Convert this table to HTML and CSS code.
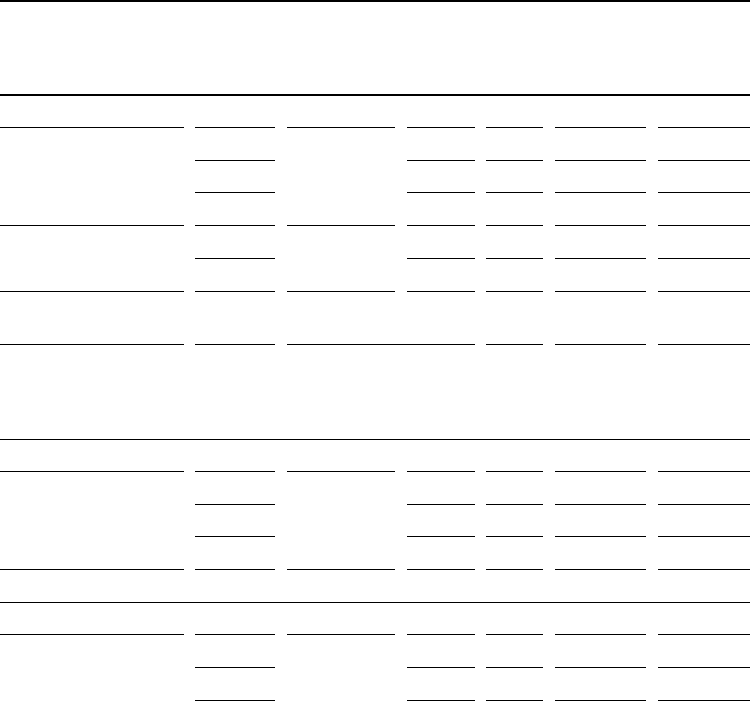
FILE: index.html
```html
<!DOCTYPE html>
<html>
<head>
<meta charset="utf-8">
<link rel="stylesheet" href="styles.css">
</head>
<body>
<div class="sheet">
  <div class="row head top-rule"></div>
  <div class="row h33 top-rule"></div>

  <div class="row h33"><div class="c c1 r"></div><div class="c c2 r"></div><div class="c c3 r"></div><div class="c c4 r"></div><div class="c c5 r"></div><div class="c c6 r"></div><div class="c c7 r"></div></div>
  <div class="row h32"><div class="c c1"></div><div class="c c2 r"></div><div class="c c3"></div><div class="c c4 r"></div><div class="c c5 r"></div><div class="c c6 r"></div><div class="c c7 r"></div></div>
  <div class="row h33"><div class="c c1"></div><div class="c c2 r"></div><div class="c c3"></div><div class="c c4 r"></div><div class="c c5 r"></div><div class="c c6 r"></div><div class="c c7 r"></div></div>
  <div class="row h33"><div class="c c1 r"></div><div class="c c2 r"></div><div class="c c3 r"></div><div class="c c4 r"></div><div class="c c5 r"></div><div class="c c6 r"></div><div class="c c7 r"></div></div>
  <div class="row h33"><div class="c c1"></div><div class="c c2 r"></div><div class="c c3"></div><div class="c c4 r"></div><div class="c c5 r"></div><div class="c c6 r"></div><div class="c c7 r"></div></div>
  <div class="row h53"><div class="c c1 r"></div><div class="c c2 r"></div><div class="c c3 r"></div><div class="c c4 r"></div><div class="c c5 r"></div><div class="c c6 r"></div><div class="c c7 r"></div></div>
  <div class="row h95"><div class="c c1 r"></div><div class="c c2 r"></div><div class="c c34 r"></div><div class="c c5 r"></div><div class="c c6 r"></div><div class="c c7 r"></div></div>

  <div class="row h32 mid-rule"></div>
  <div class="row h33"><div class="c c1 r"></div><div class="c c2 r"></div><div class="c c3 r"></div><div class="c c4 r"></div><div class="c c5 r"></div><div class="c c6 r"></div><div class="c c7 r"></div></div>
  <div class="row h32"><div class="c c1"></div><div class="c c2 r"></div><div class="c c3"></div><div class="c c4 r"></div><div class="c c5 r"></div><div class="c c6 r"></div><div class="c c7 r"></div></div>
  <div class="row h33"><div class="c c1"></div><div class="c c2 r"></div><div class="c c3"></div><div class="c c4 r"></div><div class="c c5 r"></div><div class="c c6 r"></div><div class="c c7 r"></div></div>
  <div class="row h33"><div class="c c1 r"></div><div class="c c2 r"></div><div class="c c3 r"></div><div class="c c4 r"></div><div class="c c5 r"></div><div class="c c6 r"></div><div class="c c7 r"></div></div>

  <div class="row h32 mid-rule"></div>
  <div class="row h33"><div class="c c1 r"></div><div class="c c2 r"></div><div class="c c3 r"></div><div class="c c4 r"></div><div class="c c5 r"></div><div class="c c6 r"></div><div class="c c7 r"></div></div>
  <div class="row h33"><div class="c c1"></div><div class="c c2 r"></div><div class="c c3"></div><div class="c c4 r"></div><div class="c c5 r"></div><div class="c c6 r"></div><div class="c c7 r"></div></div>
  <div class="row h33"><div class="c c1"></div><div class="c c2 r"></div><div class="c c3"></div><div class="c c4 r"></div><div class="c c5 r"></div><div class="c c6 r"></div><div class="c c7 r"></div></div>
</div>
</body>
</html>
```

FILE: styles.css
```css
html, body {
  margin: 0;
  padding: 0;
  background: #ffffff;
  font-family: "Liberation Serif", serif;
}

.sheet {
  width: 750px;
  display: flex;
  flex-direction: column;
}

.row {
  display: flex;
  box-sizing: border-box;
  flex: none;
}

.head { height: 94px; }
.h32 { height: 32px; }
.h33 { height: 33px; }
.h53 { height: 53px; }
.h95 { height: 95px; }

.top-rule { border-top: 2px solid #000; }
.mid-rule { border-top: 1px solid #000; }

.c {
  box-sizing: border-box;
  flex: none;
  height: 100%;
}

.r { border-top: 1px solid #000; }

.c1 { width: 184px; margin-right: 11px; }
.c2 { width: 80px; margin-right: 12px; }
.c3 { width: 108px; margin-right: 12px; }
.c4 { width: 68px; margin-right: 11px; }
.c34 { width: 188px; margin-right: 11px; }
.c5 { width: 57px; margin-right: 12px; }
.c6 { width: 91px; margin-right: 12px; }
.c7 { width: 92px; }
```
